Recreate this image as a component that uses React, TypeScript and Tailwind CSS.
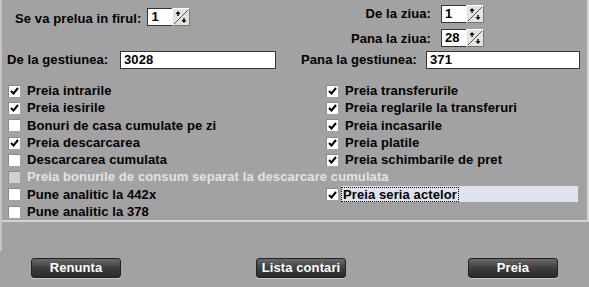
import React from 'react';

function Spinner() {
  return (
    <div className="relative w-[18px] h-[18px] bg-[#e6e4dc] border-t border-l border-white border-b border-r border-b-[#777] border-r-[#777]">
      <svg width="16" height="16" viewBox="0 0 16 16" className="absolute left-0 top-0">
        <line x1="1" y1="15" x2="15" y2="1" stroke="#555" strokeWidth="1" />
        <path d="M5 2 L7.5 5 L2.5 5 Z" fill="#000" />
        <rect x="4.3" y="4.5" width="1.4" height="2.5" fill="#000" />
        <path d="M11 14 L8.5 11 L13.5 11 Z" fill="#000" />
        <rect x="10.3" y="9" width="1.4" height="2.5" fill="#000" />
      </svg>
    </div>
  );
}

function NumBox({ value }: { value: string }) {
  return (
    <div className="flex items-center">
      <div className="w-[25px] h-[18px] bg-white border border-[#333] border-r-0 pl-[3px] leading-[16px]">{value}</div>
      <Spinner />
    </div>
  );
}

function TextBox({ value, width }: { value: string; width: string }) {
  return (
    <div className={`${width} h-[18px] bg-white border border-[#333] pl-[3px] leading-[16px]`}>{value}</div>
  );
}

function Check({ checked, disabled }: { checked?: boolean; disabled?: boolean }) {
  return (
    <div
      className={`w-[12px] h-[12px] flex items-center justify-center border-t border-l border-[#8a8a8a] ${
        disabled ? 'bg-[#cfd2c4]' : 'bg-white'
      }`}
    >
      {checked && (
        <svg width="9" height="8" viewBox="0 0 9 8">
          <path d="M1 4 L3.5 6.5 L8 1" stroke="#000" strokeWidth="2" fill="none" />
        </svg>
      )}
    </div>
  );
}

function Row({ label, checked, disabled, focus }: { label: string; checked?: boolean; disabled?: boolean; focus?: boolean }) {
  return (
    <div className="h-[17.3px] flex items-center">
      <Check checked={checked} disabled={disabled} />
      {focus ? (
        <div className="ml-[3px] flex-1 h-[16px] bg-[#dfe3ee] flex items-center">
          <span className="border border-dotted border-black px-[1px] leading-[13px]">{label}</span>
        </div>
      ) : (
        <span className={`ml-[7px] whitespace-nowrap ${disabled ? 'text-[#e2e2e2]' : ''}`}>{label}</span>
      )}
    </div>
  );
}

function Btn({ label, className }: { label: string; className: string }) {
  return (
    <button className={`${className} w-[90px] h-[20px] rounded-[3px] bg-gradient-to-b from-[#6a6a6a] via-[#3e3e3e] to-[#2a2a2a] border border-[#222] text-white leading-[18px] shadow-[0_1px_0_#c8c8c8]`}>
      {label}
    </button>
  );
}

export default function App() {
  return (
    <div className="w-[589px] h-[287px] bg-[#a2a2a2] text-black font-bold text-[13px] tracking-[0.1px] overflow-hidden" style={{ fontFamily: '"Liberation Sans", Arial, sans-serif' }}>
      <div className="h-[251px] border-l-2 border-[#c6c6c6]">
        <div className="h-[222px] border-b-2 border-r-2 border-[#d2d2d2]">
          <div className="flex h-[50px]">
            <div className="flex items-start pl-[13px] pt-[8px]">
              <span className="mr-[6px] mt-[1px]">Se va prelua in firul:</span>
              <NumBox value="1" />
            </div>
            <div className="ml-auto mr-[103px] pt-[4px] flex flex-col items-end gap-[5px]">
              <div className="flex items-center">
                <span className="mr-[10px]">De la ziua:</span>
                <NumBox value="1" />
              </div>
              <div className="flex items-center">
                <span className="mr-[10px]">Pana la ziua:</span>
                <NumBox value="28" />
              </div>
            </div>
          </div>
          <div className="flex items-center h-[19px]">
            <span className="ml-[5px] w-[113px] whitespace-nowrap">De la gestiunea:</span>
            <TextBox value="3028" width="w-[156px]" />
            <span className="ml-[25px] w-[125px] whitespace-nowrap">Pana la gestiunea:</span>
            <TextBox value="371" width="w-[154px]" />
          </div>
          <div className="pl-[6px] pt-[13px] grid grid-cols-[318px_252px]">
            <div>
              <Row label="Preia intrarile" checked />
              <Row label="Preia iesirile" checked />
              <Row label="Bonuri de casa cumulate pe zi" />
              <Row label="Preia descarcarea" checked />
              <Row label="Descarcarea cumulata" />
            </div>
            <div>
              <Row label="Preia transferurile" checked />
              <Row label="Preia reglarile la transferuri" checked />
              <Row label="Preia incasarile" checked />
              <Row label="Preia platile" checked />
              <Row label="Preia schimbarile de pret" checked />
            </div>
            <div className="col-span-2">
              <Row label="Preia bonurile de consum separat la descarcare cumulata" disabled />
            </div>
            <div>
              <Row label="Pune analitic la 442x" />
              <Row label="Pune analitic la 378" />
            </div>
            <div>
              <Row label="Preia seria actelor" checked focus />
            </div>
          </div>
        </div>
      </div>
      <div className="flex mt-[7px]">
        <Btn label="Renunta" className="ml-[31px]" />
        <Btn label="Lista contari" className="ml-[135px]" />
        <Btn label="Preia" className="ml-[122px]" />
      </div>
    </div>
  );
}
